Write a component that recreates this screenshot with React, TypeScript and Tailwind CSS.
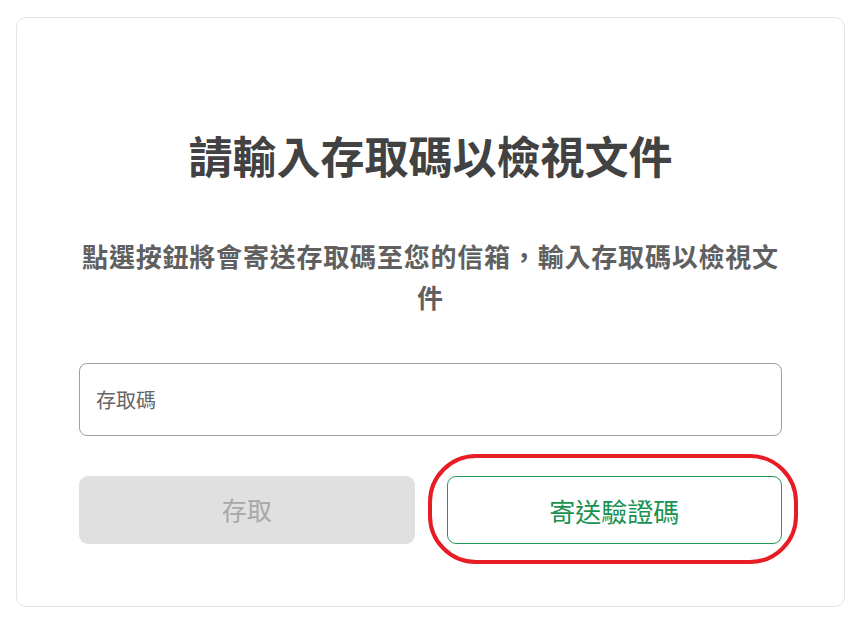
import React from "react";

export default function App() {
  return (
    <div
      className="w-[860px] h-[625px] bg-white pt-[17px] pl-[16px]"
      style={{ fontFamily: '"Noto Sans CJK TC", "Noto Sans", sans-serif' }}
    >
      <div className="w-[829px] h-[590px] border border-[#e2e2e2] rounded-[10px] bg-white px-[62px] pt-[107px] flex flex-col items-stretch">
        <h1 className="text-center text-[44px] leading-[60px] font-bold text-[#424242]">
          請輸入存取碼以檢視文件
        </h1>
        <p className="mt-[50px] text-center text-[26px] leading-[41px] tracking-[0.8px] font-bold text-[#606060]">
          點選按鈕將會寄送存取碼至您的信箱，輸入存取碼以檢視文件
        </p>
        <div className="mt-[46px] h-[73px] border border-[#9e9e9e] rounded-[8px] flex items-center px-[16px]">
          <input
            className="w-full outline-none text-[20px] text-[#333] placeholder:text-[#666] bg-transparent"
            placeholder="存取碼"
          />
        </div>
        <div className="mt-[40px] grid grid-cols-2 gap-[32px]">
          <button className="h-[68px] rounded-[9px] bg-[#e0e0e0] text-[25px] text-[#a8a8a8] flex items-center justify-center">
            存取
          </button>
          <div className="relative">
            <button className="w-full h-[68px] rounded-[9px] border border-[#1f9a55] bg-white text-[26px] text-[#1a9150] flex items-center justify-center">
              寄送驗證碼
            </button>
            <div className="absolute left-[-19px] right-[-16px] top-[-22px] bottom-[-20px] border-[4px] border-[#e81c24] rounded-[48px] pointer-events-none" />
          </div>
        </div>
      </div>
    </div>
  );
}
